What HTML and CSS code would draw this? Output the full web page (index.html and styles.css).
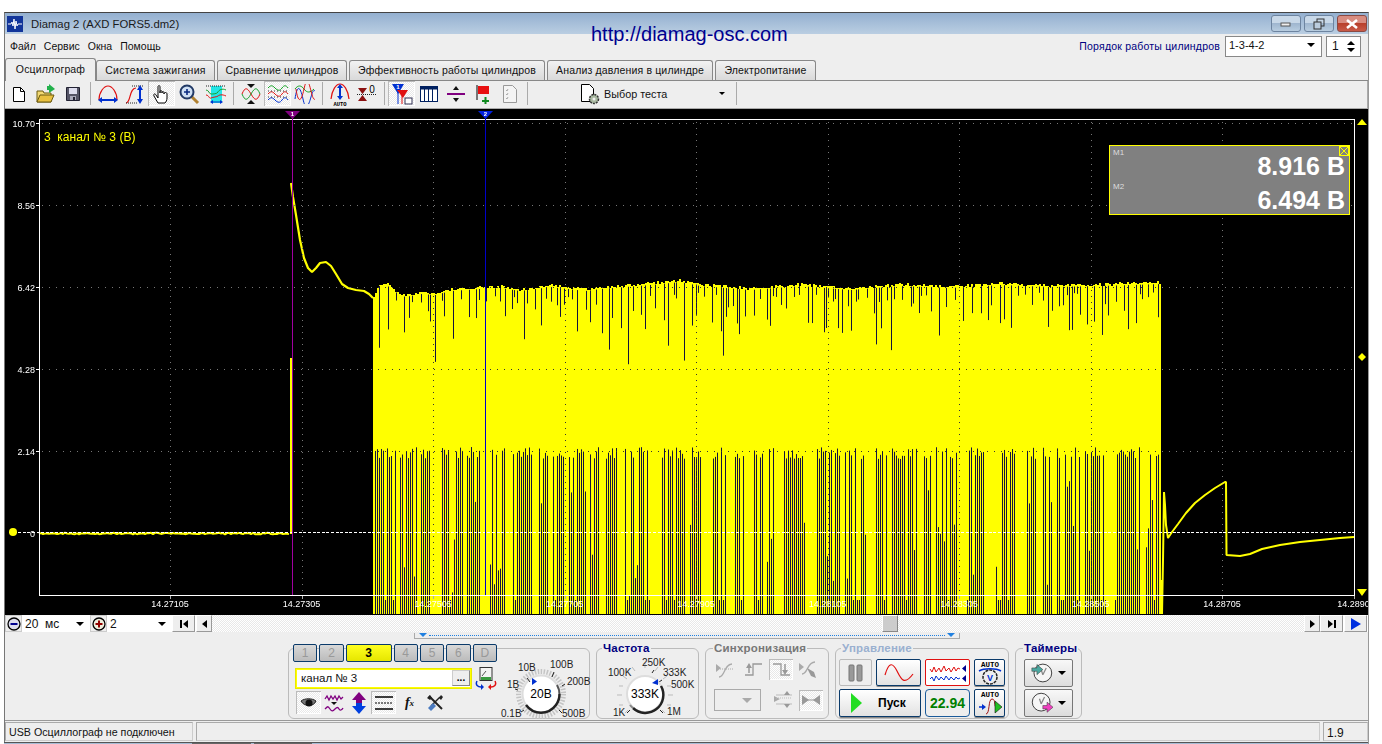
FILE: index.html
```html
<!DOCTYPE html>
<html lang="ru">
<head>
    <meta charset="UTF-8">
    <meta name="viewport" content="width=device-width, initial-scale=1.0">
    <title>Diamag 2 (AXD FORS5.dm2)</title>
    <link rel="stylesheet" href="styles.css">
</head>
<body>
<div class="window">
    <div class="titlebar">
        <svg class="app-icon" width="16" height="16" viewBox="0 0 16 16"><rect width="16" height="16" fill="#12359a"/><path d="M1 8h3l1-2 1 4 1-7 1 10 1-8 1 5 1-2h4" fill="none" stroke="#fff" stroke-width="1"/></svg>
        <span class="app-title">Diamag 2 (AXD FORS5.dm2)</span>
        <div class="win-controls">
            <button class="win-btn"><svg width="12" height="8" viewBox="0 0 12 8"><rect x="1" y="3" width="9" height="3" fill="#eee" stroke="#555"/></svg></button>
            <button class="win-btn"><svg width="12" height="12" viewBox="0 0 12 12"><rect x="4" y="1" width="7" height="7" fill="none" stroke="#333"/><rect x="1" y="4" width="7" height="7" fill="#bcd" stroke="#333"/></svg></button>
            <button class="win-btn win-close"><svg width="14" height="10" viewBox="0 0 14 10"><path d="M2 1l10 8M12 1L2 9" stroke="#fff" stroke-width="2.6"/></svg></button>
        </div>
    </div>
    <a class="site-link">http://diamag-osc.com</a>

    <div class="menubar">
        <span class="menu-item">Файл</span>
        <span class="menu-item">Сервис</span>
        <span class="menu-item">Окна</span>
        <span class="menu-item">Помощь</span>
        <span class="order-label">Порядок работы цилиндров</span>
        <div class="order-combo"><span>1-3-4-2</span><i class="arrow-down"></i></div>
        <div class="order-spin"><span>1</span><div class="spin-arrows"><i class="arrow-up"></i><i class="arrow-down"></i></div></div>
    </div>

    <div class="tabs">
        <div class="tab active">Осциллограф</div>
        <div class="tab tab-ignition">Система зажигания</div>
        <div class="tab tab-compare">Сравнение цилиндров</div>
        <div class="tab tab-power">Эффективность работы цилиндров</div>
        <div class="tab tab-pressure">Анализ давления в цилиндре</div>
        <div class="tab tab-supply">Электропитание</div>
    </div>

    <div class="toolbar">
        <div class="tool"><svg width="20" height="20" viewBox="0 0 20 20"><path d="M4.5 3.5h7l4 4v10h-11z" fill="#fff" stroke="#000"/><path d="M11.5 3.5v4h4" fill="none" stroke="#000"/></svg></div>
        <div class="tool"><svg width="22" height="22" viewBox="0 0 22 22"><path d="M2 19V8h6l1 2h7v9z" fill="#f2d873" stroke="#6a5a10"/><path d="M2 19l3-7h14l-3 7z" fill="#e8c040" stroke="#6a5a10"/><path d="M14 1l6 5-6 4z" fill="#22b14c"/><path d="M14 3v4h-2V3z" fill="#22b14c"/></svg></div>
        <div class="tool"><svg width="18" height="18" viewBox="0 0 18 18"><path d="M2.5 2.5h13v13h-13z" fill="#556" stroke="#223"/><rect x="5" y="3" width="8" height="6" fill="#dde"/><rect x="6" y="11" width="6" height="4" fill="#aab"/><rect x="9" y="12" width="2" height="3" fill="#223"/></svg></div>
        <i class="tool-sep"></i>
        <div class="tool"><svg width="22" height="22" viewBox="0 0 22 22"><path d="M2 17C2 9 7 3 11 3s9 6 9 14" fill="none" stroke="#e01010" stroke-width="1.2"/><path d="M3 17h16" stroke="#0030d0" stroke-width="2"/><path d="M1 17l4-3v6zM21 17l-4-3v6z" fill="#0030d0"/></svg></div>
        <div class="tool"><svg width="24" height="24" viewBox="0 0 24 24"><path d="M3 21c5 0 3-15 10-15" fill="none" stroke="#e01010" stroke-width="1.2"/><path d="M9 4h12M3 21h12" stroke="#222" stroke-dasharray="1 1"/><path d="M17 7v11" stroke="#0030d0" stroke-width="2"/><path d="M17 3l-3 5h6zM17 22l-3-5h6z" fill="#0030d0"/></svg></div>
        <div class="tool pressed"><svg width="20" height="22" viewBox="0 0 20 22"><path d="M6 20l-4-7c-1-2 1-3 2-1l2 3V4c0-2 2-2 2 0v6-1c0-2 2-2 2 0v1c0-2 2-2 2 0v1c0-2 3-2 3 0v4c0 2-1 4-2 5z" fill="#fff" stroke="#000"/></svg></div>
        <div class="tool"><svg width="22" height="22" viewBox="0 0 22 22"><path d="M13 13l7 7" stroke="#b08030" stroke-width="3"/><circle cx="9" cy="9" r="6.5" fill="#cfe0f4" stroke="#223a66" stroke-width="2"/><path d="M6 9h6M9 6v6" stroke="#0a2a80" stroke-width="1.6"/></svg></div>
        <div class="tool"><svg width="24" height="24" viewBox="0 0 24 24"><rect x="7" y="4" width="11" height="17" fill="#22e6e6"/><path d="M2 4h20" stroke="#222" stroke-dasharray="1 1"/><path d="M2 8c3 0 3 4 5 4s6 0 7-2 4-4 8-2" fill="none" stroke="#18a030"/><path d="M2 13c3 0 3 4 5 3s6-1 7-2 4-2 8 0" fill="none" stroke="#e01010"/><path d="M8 20h9" stroke="#0030d0"/><path d="M6 20l3-2v4zM19 20l-3-2v4z" fill="#0030d0"/></svg></div>
        <i class="tool-sep"></i>
        <div class="tool"><svg width="22" height="22" viewBox="0 0 22 22"><path d="M2 11c3-7 5-7 9 0s6 7 9 0" fill="none" stroke="#e01010"/><path d="M2 11c3 7 5 7 9 0s6-7 9 0" fill="none" stroke="#18a030"/><path d="M7 1h8l-4 4zM7 21h8l-4-4z" fill="#111"/></svg></div>
        <div class="tool pressed"><svg width="22" height="20" viewBox="0 0 22 20"><path d="M1 4c3-3 4-3 7 0s5 3 7 0 4-3 6 0" fill="none" stroke="#10a020"/><path d="M1 10c3-3 4-3 7 0s5 3 7 0 4-3 6 0" fill="none" stroke="#e01010"/><path d="M1 16c3-3 4-3 7 0s5 3 7 0 4-3 6 0" fill="none" stroke="#0030d0"/><path d="M1 7h20M1 13h20" stroke="#333" stroke-dasharray="1 2"/></svg></div>
        <div class="tool"><svg width="22" height="20" viewBox="0 0 22 20"><path d="M1 5c3-4 6-4 9 0s6 4 10 0" fill="none" stroke="#10a020"/><path d="M1 15c2-14 5-14 8 0s6 5 8-2 3-7 4-6" fill="none" stroke="#0030d0"/><path d="M2 5c2 14 5 14 8 0s5-6 7 2 3 9 4 8" fill="none" stroke="#e01010"/></svg></div>
        <i class="tool-sep"></i>
        <div class="tool"><svg width="20" height="24" viewBox="0 0 20 24"><path d="M1 17C2 8 6 2 10 2s8 6 9 15" fill="none" stroke="#e01010" stroke-width="1.2"/><path d="M10 5v10" stroke="#0030d0" stroke-width="2"/><path d="M10 2L7 6h6zM10 18l-3-4h6z" fill="#0030d0"/><text x="10" y="23.5" class="auto-text">AUTO</text></svg></div>
        <div class="tool"><svg width="22" height="20" viewBox="0 0 22 20"><path d="M2 4h9l-4.500 6zM2 17h9l-4.500-6z" fill="#8a1010"/><path d="M1 10.500h20" stroke="#222" stroke-dasharray="1 1"/><text x="16" y="9" class="zero-text">0</text></svg></div>
        <i class="tool-sep"></i>
        <div class="tool pressed"><svg width="22" height="24" viewBox="0 0 22 24"><path d="M1 2h12L7 12z" fill="#0030d0"/><path d="M6 8h11l-5 8z" fill="#e01010"/><path d="M7 10v12" stroke="#0030d0"/><path d="M11 12v10" stroke="#e01010"/><rect x="14" y="16" width="7" height="6" fill="#fff" stroke="#335"/><text x="7" y="7" class="tiny-num">1</text></svg></div>
        <div class="tool"><svg width="20" height="18" viewBox="0 0 20 18"><rect x="1.500" y="1.500" width="17" height="15" fill="#fff" stroke="#002060"/><rect x="1.500" y="1.500" width="17" height="3" fill="#002060"/><path d="M5.500 2v14M9.500 2v14M13.500 2v14" stroke="#002060"/></svg></div>
        <div class="tool"><svg width="20" height="20" viewBox="0 0 20 20"><path d="M1 10h18" stroke="#800080" stroke-width="2"/><path d="M10 2L7 6h6zM10 18l-3-4h6z" fill="#111"/></svg></div>
        <div class="tool"><svg width="16" height="20" viewBox="0 0 16 20"><path d="M2 1v15" stroke="#000"/><path d="M3 2h11v8H3z" fill="#e81010"/><path d="M7 17h7M10.500 13v7" stroke="#108a20" stroke-width="2"/></svg></div>
        <div class="tool"><svg width="16" height="20" viewBox="0 0 16 20"><path d="M1.500 1.500h9l4 4v13h-13z" fill="#f4f4f4" stroke="#999"/><path d="M4 6l1 1 1-2M4 10l1 1 1-2M4 14l1 1 1-2" fill="none" stroke="#aaa"/></svg></div>
        <i class="tool-sep"></i>
        <div class="test-select">
            <svg width="22" height="22" viewBox="0 0 22 22"><path d="M1.500 1.500h8l4 4v13h-12z" fill="#fff" stroke="#000"/><circle cx="14" cy="16" r="4.500" fill="#a8b8a0" stroke="#333" stroke-width="1.500" stroke-dasharray="2 1"/><circle cx="14" cy="16" r="1.500" fill="#eee"/></svg>
            <span>Выбор теста</span>
            <i class="arrow-down"></i>
        </div>
        <i class="tool-sep"></i>
    </div>

    <div class="scope" id="scope">
        <canvas id="scope-canvas" width="1364" height="506"></canvas>
        <div class="channel-caption">3&nbsp; канал № 3 (В)</div>
        <div class="measure">
            <span class="measure-close"></span>
            <div class="measure-name">M1</div>
            <div class="measure-value">8.916 В</div>
            <div class="measure-name measure-name-2">M2</div>
            <div class="measure-value">6.494 В</div>
        </div>
    </div>

    <div class="scalebar">
        <button class="scale-btn"><svg width="14" height="14" viewBox="0 0 14 14"><circle cx="7" cy="7" r="6" fill="#dde" stroke="#000" stroke-width="1.300"/><path d="M3.500 7h7" stroke="#000090" stroke-width="2"/></svg></button>
        <div class="scale-combo scale-time"><span>20&nbsp; мс</span><i class="arrow-down"></i></div>
        <button class="scale-btn"><svg width="14" height="14" viewBox="0 0 14 14"><circle cx="7" cy="7" r="6" fill="#eed" stroke="#000" stroke-width="1.300"/><path d="M3.500 7h7M7 3.500v7" stroke="#900000" stroke-width="2"/></svg></button>
        <div class="scale-combo scale-zoom"><span>2</span><i class="arrow-down"></i></div>
        <button class="nav-btn nav-wide"><i class="bar"></i><i class="arrow-left"></i></button>
        <button class="nav-btn"><i class="arrow-left"></i></button>
        <div class="scrollbar"><span class="scroll-thumb"></span></div>
        <button class="nav-btn"><i class="arrow-right"></i></button>
        <button class="nav-btn nav-wide"><i class="arrow-right"></i><i class="bar"></i></button>
        <button class="nav-btn nav-wide"><i class="arrow-right arrow-blue"></i></button>
    </div>

    <div class="panel">
        <div class="marker-strip"><i class="strip-mark"></i><span class="strip-dots"></span><i class="strip-mark"></i></div>
        <div class="groups">
            <div class="group group-channel">
                <div class="channel-left">
                    <div class="channel-tabs">
                        <span class="ch-btn">1</span>
                        <span class="ch-btn">2</span>
                        <span class="ch-btn ch-active">3</span>
                        <span class="ch-btn">4</span>
                        <span class="ch-btn">5</span>
                        <span class="ch-btn">6</span>
                        <span class="ch-btn">D</span>
                    </div>
                    <div class="channel-input-row">
                        <div class="channel-input"><span>канал № 3</span><button class="dots-btn">...</button></div>
                        <svg width="22" height="24" viewBox="0 0 22 24"><rect x="5" y="1.500" width="12" height="13" fill="#f4f4f4" stroke="#333"/><path d="M7 10l4-5" stroke="#555"/><rect x="6" y="11" width="10" height="3" fill="#3a9a40"/><path d="M2 15c-2 4 1 6 4 6" fill="none" stroke="#0030d0" stroke-width="1.500"/><path d="M6 18v6l3-3z" fill="#0030d0"/><path d="M20 15c2 4-1 6-4 6" fill="none" stroke="#e01010" stroke-width="1.500"/><path d="M16 18v6l-3-3z" fill="#e01010"/></svg>
                    </div>
                    <div class="channel-tools">
                        <span class="ch-tool pressed"><svg width="18" height="14" viewBox="0 0 18 14"><path d="M1 5c4-3 11-3 15 0-2 6-12 6-15 0z" fill="#777" stroke="#222"/><circle cx="9" cy="7" r="3.500" fill="#111"/></svg></span>
                        <span class="ch-tool"><svg width="20" height="18" viewBox="0 0 20 18"><path d="M1 5l2-3 2 4 2-4 2 3 2-3 2 4 2-4 2 3 2-2" fill="none" stroke="#800080" stroke-width="1.300"/><path d="M7 8h6l-3 3z" fill="#111"/><path d="M1 15c3-3 3-3 5 0s3 2 5 0 3-2 4 0 3 1 4-1" fill="none" stroke="#800080" stroke-width="1.300"/></svg></span>
                        <span class="ch-tool"><svg width="18" height="22" viewBox="0 0 18 22"><path d="M9 0L2 8h4v3h6V8h4z" fill="#800080"/><path d="M9 22l7-8h-4v-3H6v3H2z" fill="#0040e0"/></svg></span>
                        <span class="ch-tool pressed"><svg width="20" height="16" viewBox="0 0 20 16"><path d="M1 2h18M1 14h18" stroke="#000" stroke-width="1.300"/><path d="M1 8h18" stroke="#000" stroke-dasharray="2 1"/></svg></span>
                        <span class="ch-tool ch-fx">f<small>x</small></span>
                        <span class="ch-tool"><svg width="18" height="18" viewBox="0 0 18 18"><path d="M3 2l13 13" stroke="#222" stroke-width="2"/><path d="M1 4l3-3 2 3-2 2z" fill="#222"/><path d="M14 3L5 12" stroke="#222" stroke-width="1.500"/><path d="M15 1l2 2-2 3-2-2z" fill="#222"/><path d="M7 9l3 3-5 5-3-3z" fill="#4a7ac0"/></svg></span>
                    </div>
                </div>
                <svg class="knob" width="94" height="71" viewBox="0 0 94 71">
                    <circle cx="44" cy="45" r="22.500" fill="none" stroke="#c4c4c4" stroke-width="5" stroke-dasharray="1.500 1.500"/>
                    <circle cx="44" cy="45" r="18.500" fill="#fff" stroke="#ddd" stroke-width="2"/>
                    <path d="M59 56a18.500 18.500 0 0 1-30 0M62.500 45a18.500 18.500 0 0 1-3.500 11" fill="none" stroke="#222" stroke-width="2.500"/>
                    <path d="M60 36a18.500 18.500 0 0 1 2.500 9" fill="none" stroke="#555" stroke-width="2"/>
                    <path d="M33 33l-3-4M55 28l2-5M65 37l3-2M21 41l-3-1M27 61l-3 2M62 61l3 3" stroke="#222"/>
                    <path d="M35 29v7l5-3.500z" fill="#0030d0"/>
                    <text x="44" y="49" class="knob-value">20В</text>
                    <text x="21" y="22" class="knob-label">10В</text>
                    <text x="53" y="19" class="knob-label">100В</text>
                    <text x="70" y="36" class="knob-label">200В</text>
                    <text x="10" y="39" class="knob-label">1В</text>
                    <text x="4" y="68" class="knob-label">0.1В</text>
                    <text x="65" y="68" class="knob-label">500В</text>
                </svg>
            </div>

            <div class="group group-freq">
                <span class="group-title">Частота</span>
                <svg class="knob" width="103" height="71" viewBox="1 0 103 71">
                    <path d="M49 14v5M36 18l3 4M62 18l-3 4M27 27l4 3M71 27l-4 3M23 37h4M75 37h-4M21 46h5M77 46h-5M23 56h4M75 56h-4M29 64l3-3M69 64l-3-3" stroke="#bbb"/>
                    <path d="M31 64l3-3M67 64l-3-3M58 21l-2 3M66 31l-3 2" stroke="#222"/>
                    <circle cx="49" cy="45" r="18" fill="#fff" stroke="#ddd" stroke-width="2"/>
                    <path d="M65 37a18 18 0 0 1-28 22" fill="none" stroke="#222" stroke-width="2.500"/>
                    <path d="M37 59a18 18 0 0 1-3-3" fill="none" stroke="#888" stroke-width="2"/>
                    <path d="M62 30v6l-6-2z" fill="#0030d0"/>
                    <text x="49" y="49" class="knob-value">333K</text>
                    <text x="46" y="17" class="knob-label">250K</text>
                    <text x="67" y="27" class="knob-label">333K</text>
                    <text x="75" y="39" class="knob-label">500K</text>
                    <text x="12" y="27" class="knob-label">100K</text>
                    <text x="17" y="67" class="knob-label">1K</text>
                    <text x="71" y="66" class="knob-label">1M</text>
                </svg>
            </div>

            <div class="group group-sync">
                <span class="group-title">Синхронизация</span>
                <div class="sync-row">
                    <span class="sync-tool"><svg width="20" height="18" viewBox="0 0 20 18"><path d="M1 3l5 4-5 4z" fill="#aaa"/><path d="M4 16c6 0 5-13 13-13" fill="none" stroke="#aaa" stroke-width="1.300"/><path d="M5 8h13" stroke="#aaa" stroke-dasharray="1 1"/></svg></span>
                    <span class="sync-tool"><svg width="20" height="18" viewBox="0 0 20 18"><path d="M2 14h8V3h9" fill="none" stroke="#999" stroke-width="1.300"/><path d="M6 5v7" stroke="#999" stroke-width="1.500"/><path d="M6 2L3 7h6z" fill="#999"/></svg></span>
                    <span class="sync-tool pressed"><svg width="20" height="18" viewBox="0 0 20 18"><path d="M2 3h8v11h9" fill="none" stroke="#999" stroke-width="1.300"/><path d="M14 3v7" stroke="#999" stroke-width="1.500"/><path d="M14 14l-3-5h6z" fill="#999"/></svg></span>
                    <span class="sync-tool"><svg width="22" height="20" viewBox="0 0 22 20"><path d="M1 3l5 4-5 4z" fill="#aaa"/><path d="M4 14c6 0 5-12 13-12" fill="none" stroke="#aaa" stroke-width="1.300"/><path d="M9 8l7 4 2 6-5-2z" fill="#999"/></svg></span>
                </div>
                <div class="sync-row sync-row-low">
                    <div class="sync-combo"><i class="arrow-down arrow-gray"></i></div>
                    <span class="sync-tool"><svg width="20" height="20" viewBox="0 0 20 20"><path d="M1 6l6 3-6 3z" fill="#aaa"/><path d="M3 5h16M3 14h16" stroke="#bbb"/><path d="M3 8h16" stroke="#bbb" stroke-dasharray="1 1"/><path d="M14 1l-3 4h6zM14 18l-3-4h6z" fill="#999"/></svg></span>
                    <span class="sync-tool pressed"><svg width="20" height="12" viewBox="0 0 20 12"><path d="M1 1l7 5-7 5zM19 1l-7 5 7 5z" fill="#999"/><path d="M1 6h18" stroke="#999"/></svg></span>
                </div>
            </div>

            <div class="group group-control">
                <span class="group-title">Управление</span>
                <div class="control-grid">
                    <button class="ctl ctl-off"><svg width="18" height="20" viewBox="0 0 18 20"><rect x="2" y="2" width="5" height="16" rx="1" fill="#999" stroke="#777"/><rect x="10" y="2" width="5" height="16" rx="1" fill="#999" stroke="#777"/></svg></button>
                    <button class="ctl"><svg width="30" height="20" viewBox="0 0 30 20"><path d="M1 12C5-2 9 0 13 8s7 15 16 3" fill="none" stroke="#e01010" stroke-width="1.200"/></svg></button>
                    <button class="ctl ctl-red"><svg width="38" height="22" viewBox="0 0 38 22"><path d="M1 7l2 3 2-5 2 5 3-4 2 4 3-6 2 5 3-3 2 4 3-5 2 4 2-3 2 1" fill="none" stroke="#e01010"/><path d="M1 17l2-2 2 4 2-5 3 4 2-3 3 3 2-4 3 4 2-3 3 3 2-3 2 2 2-1" fill="none" stroke="#0030d0"/><path d="M37 3v7l-4-3.500zM37 13v7l-4-3.500z" fill="#000090"/></svg></button>
                    <button class="ctl"><svg width="26" height="26" viewBox="0 0 26 26"><text x="13" y="7" class="auto-text-lg">AUTO</text><path d="M2 11c5-3 17-3 22 0" fill="none" stroke="#0030d0" stroke-width="1.500"/><circle cx="13" cy="17" r="7" fill="#eee" stroke="#222" stroke-width="1.500" stroke-dasharray="3 1"/><text x="13" y="20.500" class="v-text">V</text></svg></button>
                    <button class="ctl ctl-start"><svg width="18" height="22" viewBox="0 0 18 22"><path d="M4 1l11 10L4 21z" fill="#22dd22"/></svg><b>Пуск</b></button>
                    <button class="ctl ctl-time">22.94</button>
                    <button class="ctl"><svg width="26" height="26" viewBox="0 0 26 26"><text x="13" y="7" class="auto-text-lg">AUTO</text><path d="M6 17h-4" stroke="#0030d0" stroke-width="1.500"/><path d="M5 14l4 3-4 3z" fill="#0030d0"/><path d="M9 24c4 0 2-15 6-15s2 8 4 8" fill="none" stroke="#a01010"/><path d="M18 11l7 6-7 6z" fill="#22c022" stroke="#111" stroke-width=".6"/></svg></button>
                </div>
            </div>

            <div class="group group-timers">
                <span class="group-title">Таймеры</span>
                <button class="timer-btn">
                    <svg width="26" height="24" viewBox="0 0 26 24"><circle cx="14" cy="12" r="10.500" fill="#f6f6f6" stroke="#222"/><path d="M14 14l4-8M14 14l-2-6" stroke="#888" stroke-width="1.500"/><path d="M1 6h6V2l7 6-7 6v-4H1z" fill="#4aa8a0" stroke="#333" stroke-width=".6"/></svg>
                    <i class="arrow-down"></i>
                </button>
                <button class="timer-btn">
                    <svg width="26" height="24" viewBox="0 0 26 24"><circle cx="12" cy="11" r="10.500" fill="#f6f6f6" stroke="#222"/><path d="M12 13l4-8M12 13l-2-6" stroke="#888" stroke-width="1.500"/><path d="M14 15h5v-4l7 6-7 6v-4h-5z" fill="#f040c0" stroke="#333" stroke-width=".6"/></svg>
                    <i class="arrow-down"></i>
                </button>
            </div>
        </div>
    </div>

    <div class="statusbar">
        <div class="status-cell status-main">USB Осциллограф не подключен</div>
        <div class="status-cell status-mid"></div>
        <div class="status-cell status-ver">1.9</div>
    </div>
    <div class="taskstrip"><span class="task-tab"></span><span class="task-tab task-tab-2"></span></div>
</div>
<script src="scope.js"></script>
</body>
</html>
```

FILE: styles.css
```css
* {
    box-sizing: border-box;
}

html, body {
    margin: 0;
    height: 744px;
    overflow: hidden;
    background-color: white;
}

body {
    padding: 12px 13px 0 4px;
    font-family: 'Liberation Sans', Arial, sans-serif;
    font-size: 11px;
    color: #111;
}

button {
    font-family: inherit;
    padding: 0;
    cursor: default;
}

i {
    display: block;
}

.window {
    position: relative;
    width: 1365px;
    height: 732px;
    background-color: #eeeeee;
    border-top: 1px solid #444;
    border-left: 1px solid #777;
    border-right: 1px solid #999;
}

/* small arrows */
.arrow-down, .arrow-up, .arrow-left, .arrow-right {
    width: 0;
    height: 0;
    border-style: solid;
    border-color: transparent;
}

.arrow-down {
    border-width: 4px 4px 0;
    border-top-color: #000;
}

.arrow-up {
    border-width: 0 4px 4px;
    border-bottom-color: #000;
}

.arrow-left {
    border-width: 4px 5px 4px 0;
    border-right-color: #000;
}

.arrow-right {
    border-width: 4px 0 4px 5px;
    border-left-color: #000;
}

.arrow-blue {
    border-width: 6px 0 6px 10px;
    border-left-color: #0030e0;
}

.arrow-gray {
    border-top-color: #aaa;
    border-width: 5px 5px 0;
}

/* title bar */
.titlebar {
    display: flex;
    align-items: center;
    height: 21px;
    padding-left: 2px;
    background: linear-gradient(#94b0d0, #bacee2);
}

.app-title {
    margin-left: 8px;
    font-size: 11.3px;
    color: #1a1a1a;
}

.win-controls {
    display: flex;
    gap: 3px;
    margin-left: auto;
    margin-right: 1px;
}

.win-btn {
    display: flex;
    align-items: center;
    justify-content: center;
    width: 30px;
    height: 17px;
    border: 1px solid #6d84a0;
    border-radius: 3px;
    background: linear-gradient(#c8d8e8 45%, #9fb6cf 50%, #b8cde0);
}

.win-close {
    background: linear-gradient(#d88c80 45%, #b8402c 50%, #c85a48);
    border-color: #8a4a44;
}

.site-link {
    position: absolute;
    left: 586px;
    top: 10px;
    font-size: 20px;
    color: #000090;
}

/* menu */
.menubar {
    display: flex;
    align-items: center;
    height: 24px;
    padding-left: 5px;
}

.menu-item {
    margin-right: 8px;
    font-size: 10.5px;
}

.order-label {
    margin-left: auto;
    margin-right: 5px;
    font-size: 10.5px;
    letter-spacing: 0.2px;
    color: #000080;
}

.order-combo {
    display: flex;
    align-items: center;
    justify-content: space-between;
    width: 97px;
    height: 21px;
    padding: 0 6px 2px 3px;
    background-color: white;
    border: 1px solid #888;
}

.order-spin {
    display: flex;
    align-items: center;
    justify-content: space-between;
    width: 35px;
    height: 21px;
    margin: 0 7px 0 4px;
    padding: 0 5px;
    font-size: 12px;
    background-color: white;
    border: 1px solid #888;
}

.spin-arrows {
    display: flex;
    flex-direction: column;
    gap: 3px;
}

/* tabs */
.tabs {
    display: flex;
    height: 23px;
    border-bottom: 1px solid #888;
}

.tab {
    width: 119px;
    height: 20px;
    margin: 2px 2px 0 0;
    padding-top: 3px;
    text-align: center;
    font-size: 10.5px;
    letter-spacing: 0.15px;
    background: linear-gradient(#f2f2f2, #d9d9d9);
    border: 1px solid #888;
    border-bottom: none;
    border-radius: 3px 3px 0 0;
}

.tab-ignition {
    letter-spacing: 0.3px;
}

.tab.active {
    width: 91px;
    height: 23px;
    margin: 0;
    padding-top: 4px;
    background: #eee;
}

.tab-compare { width: 130px; }
.tab-power { width: 196px; }
.tab-pressure { width: 166px; }
.tab-supply { width: 101px; }

/* toolbar */
.toolbar {
    display: flex;
    align-items: center;
    height: 28px;
    padding: 0 0 2px 0;
    border-bottom: 1px solid #aaa;
    border-right: 1px solid #aaa;
}

.tool {
    display: flex;
    align-items: center;
    justify-content: center;
    width: 27px;
    height: 25px;
}

.pressed {
    background: repeating-conic-gradient(#fff 0 25%, #e8e8e8 0 50%) 0 0 / 2px 2px;
    box-shadow: inset 1px 1px 0 #bbb, inset -1px -1px 0 #fff;
}

.tool-sep {
    align-self: stretch;
    width: 1px;
    margin: 1px 3px 1px 4px;
    background-color: #aaa;
}

.test-select {
    display: flex;
    align-items: center;
    width: 201px;
    padding: 0 7px 0 49px;
    font-size: 10.8px;
}

.test-select span {
    margin-left: 2px;
}

.test-select .arrow-down {
    margin-left: auto;
    border-width: 3px 3px 0;
}

.auto-text {
    font: bold 5.500px 'Liberation Mono', monospace;
    text-anchor: middle;
    fill: #000;
}

.auto-text-lg {
    font: bold 7.500px 'Liberation Mono', monospace;
    text-anchor: middle;
    fill: #000;
}

.zero-text {
    font: 10px 'Liberation Sans', sans-serif;
    text-anchor: middle;
    fill: #000;
}

.tiny-num {
    font: bold 6px 'Liberation Sans', sans-serif;
    text-anchor: middle;
    fill: #fff;
}

.v-text {
    font: bold 9px 'Liberation Sans', sans-serif;
    text-anchor: middle;
    fill: #0030d0;
}

/* oscilloscope */
.scope {
    position: relative;
    height: 506px;
    background-color: black;
    overflow: hidden;
}

.scope canvas {
    display: block;
}

.y-label, .x-label, .cursor-num {
    position: absolute;
    font-size: 9px;
    line-height: 10px;
    color: #fff;
    white-space: nowrap;
}

.y-label {
    width: 30px;
    text-align: right;
}

.x-label {
    width: 44px;
    text-align: center;
}

.cursor-num {
    width: 9px;
    font-size: 6px;
    line-height: 7px;
    font-weight: bold;
    text-align: center;
}

.channel-caption {
    position: absolute;
    left: 39px;
    top: 21px;
    font-size: 12px;
    color: #ffff00;
}

.measure {
    position: absolute;
    left: 1104px;
    top: 36px;
    width: 241px;
    height: 70px;
    padding: 0 4px 0 3px;
    background-color: #808080;
    border: 1px solid #ffff00;
    color: #fff;
}

.measure-close {
    position: absolute;
    right: 0;
    top: 0;
    width: 10px;
    height: 10px;
    border: 1px solid #ffff00;
    background:
        linear-gradient(45deg, transparent 46%, #ffff00 46%, #ffff00 54%, transparent 54%),
        linear-gradient(-45deg, transparent 46%, #ffff00 46%, #ffff00 54%, transparent 54%);
}

.measure-name {
    height: 0;
    padding-top: 2px;
    font-size: 8px;
    line-height: 9px;
    color: #ddd;
}

.measure-value {
    height: 32px;
    padding-top: 4px;
    text-align: right;
    font-size: 25px;
    line-height: 29px;
    font-weight: bold;
}

/* scale row */
.scalebar {
    display: flex;
    height: 17px;
    background-color: white;
}

.scale-btn {
    display: flex;
    align-items: center;
    justify-content: center;
    width: 17px;
    height: 17px;
    background-color: #eee;
    border: 1px solid #ccc;
}

.scale-combo {
    display: flex;
    align-items: center;
    justify-content: space-between;
    padding: 0 6px 0 3px;
    font-size: 12px;
    background-color: white;
}

.scale-time { width: 68px; }
.scale-zoom { width: 65px; }

.nav-btn {
    display: flex;
    align-items: center;
    justify-content: center;
    gap: 1px;
    width: 16px;
    height: 17px;
    background-color: #eee;
    border: 1px solid #fff;
    border-right-color: #999;
    border-bottom-color: #999;
}

.nav-wide {
    width: 23px;
    margin-right: 1px;
}

.nav-btn .bar {
    width: 2px;
    height: 8px;
    background-color: #000;
}

.scrollbar {
    position: relative;
    flex: 1;
    background: repeating-conic-gradient(#fff 0 25%, #e8e8e8 0 50%) 0 0 / 2px 2px;
}

.scroll-thumb {
    position: absolute;
    left: 670px;
    top: 0;
    width: 16px;
    height: 17px;
    background-color: #ccc;
    border: 1px solid #fff;
    border-right-color: #888;
    border-bottom-color: #888;
}

/* bottom panel */
.panel {
    height: 88px;
    border-bottom: 1px solid #999;
}

.marker-strip {
    display: flex;
    align-items: flex-start;
    justify-content: space-between;
    width: 546px;
    height: 6px;
    margin: 1px 0 0 409px;
    padding: 0 4px;
    border: 1px solid #aaa;
    border-top: none;
}

.strip-mark {
    width: 0;
    height: 0;
    border-style: solid;
    border-color: transparent;
    border-width: 4px 4px 0;
    border-top-color: #2080e0;
}

.strip-dots {
    flex: 1;
    height: 1px;
    margin: 2px 2px 0;
    border-top: 1px dotted #2080e0;
}

.groups {
    display: flex;
    gap: 6px;
    margin: 9px 0 0 283px;
}

.group {
    position: relative;
    height: 71px;
    border: 1px solid #bbb;
    border-radius: 6px;
}

.group-title {
    position: absolute;
    top: -7px;
    left: 5px;
    padding: 0 1px;
    font-size: 11.5px;
    line-height: 13px;
    font-weight: bold;
    letter-spacing: 0.2px;
    color: #000080;
    background-color: #eee;
}

/* channel group */
.group-channel {
    display: flex;
    width: 302px;
}

.channel-left {
    width: 208px;
}

.channel-tabs {
    display: flex;
    gap: 2px;
    margin: -5px 0 0 4px;
}

.ch-btn {
    width: 25px;
    height: 18px;
    text-align: center;
    font-size: 12px;
    line-height: 17px;
    color: #999;
    background: linear-gradient(#d8d8d8, #bbb);
    border: 1px solid #0a3a6a;
    border-radius: 2px;
}

.ch-active {
    width: 47px;
    font-weight: bold;
    color: #000;
    background: linear-gradient(#ffff20, #e6e600);
}

.channel-input-row {
    display: flex;
    align-items: center;
    gap: 3px;
    margin: 4px 0 0 6px;
}

.channel-input {
    display: flex;
    align-items: center;
    justify-content: space-between;
    width: 177px;
    height: 21px;
    padding: 0 1px 0 5px;
    font-size: 11.5px;
    background-color: white;
    border: 1px solid #e8e800;
    outline: 1px solid #ffff00;
    outline-offset: -2px;
}

.dots-btn {
    width: 18px;
    height: 16px;
    font-size: 10px;
    font-weight: bold;
    line-height: 8px;
    background-color: #eee;
    border: 1px solid #ccc;
    border-right-color: #888;
    border-bottom-color: #888;
}

.channel-tools {
    display: flex;
    align-items: center;
    margin: 1px 0 0 7px;
}

.ch-tool {
    display: flex;
    align-items: center;
    justify-content: center;
    width: 25px;
    height: 23px;
}

.ch-fx {
    margin-left: 1px;
    font-family: 'Liberation Serif', serif;
    font-size: 14px;
    font-weight: bold;
    font-style: italic;
}

.ch-fx small {
    font-size: 9px;
}

.knob {
    display: block;
    overflow: visible;
}

.knob-label {
    font: 10px 'Liberation Sans', sans-serif;
    fill: #222;
}

.knob-value {
    font: 12px 'Liberation Sans', sans-serif;
    text-anchor: middle;
    fill: #000;
}

.group-freq {
    width: 103px;
}

/* synchronisation, disabled */
.group-sync {
    width: 124px;
    padding: 10px 0 0 7px;
}

.group-sync .group-title {
    left: 7px;
    color: #777;
}

.sync-row {
    display: flex;
    gap: 4px;
}

.sync-row-low {
    align-items: center;
    margin-top: 9px;
    margin-left: 1px;
}

.sync-tool {
    display: flex;
    align-items: center;
    justify-content: center;
    width: 24px;
    height: 21px;
}

.sync-combo {
    display: flex;
    align-items: center;
    justify-content: flex-end;
    width: 47px;
    height: 22px;
    margin-right: 6px;
    padding-right: 8px;
    border: 1px solid #aaa;
}

/* control group */
.group-control {
    width: 174px;
    padding: 10px 0 0 3px;
}

.group-control .group-title {
    color: #9ab0d0;
}

.control-grid {
    display: grid;
    grid-template-columns: 33px 45px 45px 31px;
    grid-template-rows: 27px 28px;
    gap: 3px 4px;
}

.ctl {
    display: flex;
    align-items: center;
    justify-content: center;
    background: linear-gradient(#fff, #e2e2e2);
    border: 1px solid #0a3a6a;
    border-radius: 2px;
    box-shadow: 0 1px 0 #888;
}

.ctl-off {
    background: #eee;
    border-color: #bbb;
    box-shadow: none;
}

.ctl-red {
    border-color: #e01010;
    box-shadow: none;
    background: #fff;
}

.ctl-start {
    grid-column: span 2;
    justify-content: flex-start;
    padding-left: 7px;
    font-size: 12px;
}

.ctl-start b {
    margin-left: 13px;
}

.ctl-time {
    font-size: 14px;
    font-weight: bold;
    color: #008000;
    background: #eee;
    border-color: #1a5a9a;
    border-radius: 4px;
    box-shadow: none;
}

/* timers */
.group-timers {
    width: 67px;
    padding: 10px 0 0 8px;
}

.group-timers .group-title {
    left: 7px;
}

.timer-btn {
    display: flex;
    align-items: center;
    gap: 5px;
    width: 49px;
    height: 28px;
    margin-bottom: 2px;
    padding: 0 6px;
    background: linear-gradient(#f8f8f8, #dcdcdc);
    border: 1px solid #777;
    border-radius: 2px;
}

/* status bar */
.statusbar {
    display: flex;
    height: 21px;
    padding-top: 1px;
    gap: 3px;
}

.status-cell {
    height: 19px;
    padding: 3px 0 0 3px;
    font-size: 10.7px;
    border: 1px solid #ccc;
    border-top-color: #aaa;
    border-left-color: #aaa;
}

.status-main { width: 188px; }
.status-mid { width: 1124px; }
.status-ver { flex: 1; font-size: 12px; }

.taskstrip {
    position: relative;
    display: flex;
    height: 4px;
    margin-left: -1px;
    padding-left: 188px;
    gap: 3px;
    background-color: #a6bcd4;
    border-top: 1px solid #555;
}

.task-tab {
    width: 59px;
    background-color: #eee;
    border: 1px solid #666;
    border-bottom: none;
}

.task-tab-2 {
    width: 58px;
}
```

FILE: scope.js
```js
const scope = document.getElementById('scope');
const ctx = document.getElementById('scope-canvas').getContext('2d');

// everything below is in page coordinates of the screenshot
const ORIGIN_X = 5;
const ORIGIN_Y = 109;
const FRAME = { left: 39, top: 119, right: 1354, bottom: 595 };
const BLOCK = { left: 373, right: 1161, bottom: 614 };
const YELLOW = '#ffff00';

const Y_TICKS = [[123, '10.70'], [205, '8.56'], [287, '6.42'], [369, '4.28'], [451, '2.14'], [533, '0']];
const X_START = 170;
const X_STEP = 131.5;
const X_NAMES = ['14.27105', '14.27305', '14.27505', '14.27705', '14.27905', '14.28105', '14.28305', '14.28505', '14.28705', '14.2890'];

let seed = 4711;
function rnd() {
    seed = (seed * 16807) % 2147483647;
    return seed / 2147483647;
}

function lerpTable(table, x) {
    for (let i = 1; i < table.length; i++) {
        if (x <= table[i][0]) {
            const a = table[i - 1];
            const b = table[i];
            return a[1] + (b[1] - a[1]) * (x - a[0]) / (b[0] - a[0]);
        }
    }
    return table[table.length - 1][1];
}

function addLabel(cls, text, x, y) {
    const el = document.createElement('div');
    el.className = cls;
    el.textContent = text;
    el.style.left = (x - ORIGIN_X) + 'px';
    el.style.top = (y - ORIGIN_Y) + 'px';
    scope.appendChild(el);
}

function polyline(points, width) {
    ctx.strokeStyle = YELLOW;
    ctx.lineWidth = width;
    ctx.lineJoin = 'bevel';
    ctx.beginPath();
    points.forEach((p, i) => i ? ctx.lineTo(p[0], p[1]) : ctx.moveTo(p[0], p[1]));
    ctx.stroke();
}

function triangle(x1, y1, x2, y2, x3, y3, color) {
    ctx.fillStyle = color;
    ctx.beginPath();
    ctx.moveTo(x1, y1);
    ctx.lineTo(x2, y2);
    ctx.lineTo(x3, y3);
    ctx.fill();
}

// top edge of the dense part
const ENVELOPE = [[373, 297], [378, 283], [386, 282], [395, 289], [405, 294], [420, 291], [435, 292], [450, 288],
    [480, 286], [500, 285], [520, 288], [550, 284], [585, 288], [600, 286], [650, 282], [680, 279], [700, 283],
    [750, 287], [800, 283], [850, 287], [900, 283], [950, 285], [1000, 282], [1050, 284], [1100, 283], [1161, 281]];

function drawBlock() {
    ctx.fillStyle = YELLOW;
    for (let x = BLOCK.left; x < BLOCK.right; x += 2) {
        const top = Math.round(lerpTable(ENVELOPE, x) + rnd() * 3);
        ctx.fillRect(x, top, 2, BLOCK.bottom - top);
    }

    // thin notches hanging from the top edge
    ctx.fillStyle = '#14143c';
    for (let x = BLOCK.left + 6; x < BLOCK.right;) {
        const top = lerpTable(ENVELOPE, x) + 3;
        const r = rnd();
        const depth = r > 0.88 ? 42 + rnd() * 36 : r > 0.45 ? 20 + rnd() * 25 : 6 + rnd() * 14;
        ctx.fillRect(x, top, 1, depth);
        x += 2 + Math.floor(rnd() * 8);
    }

    // bursts of lines rising from the bottom
    for (let x = BLOCK.left + 2; x < BLOCK.right - 2;) {
        const count = 4 + Math.floor(rnd() * 10);
        for (let i = 0; i < count && x < BLOCK.right - 2; i++) {
            const r = rnd();
            const top = r > 0.85 ? 480 + rnd() * 120 : r > 0.75 ? 600 : 447 + rnd() * 12;
            ctx.fillRect(x, top, 1, BLOCK.bottom - top);
            x += 2;
        }
        x += 3 + Math.floor(rnd() * 9);
    }
}

function drawGrid() {
    for (let k = 0; k < X_NAMES.length; k++) {
        const x = Math.round(X_START + k * X_STEP);
        for (let y = FRAME.top + 3; y < FRAME.bottom; y += 6) {
            ctx.fillStyle = (x > BLOCK.left && x < BLOCK.right && y > 285) ? '#333' : '#777';
            ctx.fillRect(x, y, 1, 1);
        }
        ctx.fillStyle = '#aaa';
        ctx.fillRect(x, FRAME.bottom, 1, 4);
    }
    for (let i = 0; i < 5; i++) {
        const y = Y_TICKS[i][0];
        for (let x = FRAME.left + 3; x < FRAME.right; x += 7) {
            ctx.fillStyle = (x > BLOCK.left && x < BLOCK.right && y > 285) ? '#333' : '#777';
            ctx.fillRect(x, y, 1, 1);
        }
        ctx.fillStyle = '#fff';
        ctx.fillRect(FRAME.left - 3, y, 3, 1);
    }
}

function drawTrace() {
    // flat part with a little noise
    const flat = [];
    for (let x = 39; x <= 290; x += 2) flat.push([x, 533.5 + (rnd() - 0.5) * 1.6]);
    polyline(flat, 2);
    ctx.fillStyle = YELLOW;
    ctx.fillRect(290, 358, 2, 176);

    polyline([[291, 183], [293, 197], [296, 215], [300, 240], [304, 258], [308, 268], [312, 272], [316, 268],
        [320, 263], [326, 262], [331, 266], [336, 274], [342, 284], [348, 288], [356, 290], [364, 291], [369, 294], [373, 298]], 2.2);

    // after the burst
    ctx.fillRect(1161, 580, 2, 34);
    polyline([[1162, 614], [1163, 560], [1164, 492], [1165, 505], [1166, 525], [1168, 538], [1172, 532], [1178, 524],
        [1186, 513], [1195, 503], [1205, 495], [1215, 488], [1225, 482], [1226, 482], [1226.5, 555], [1240, 556],
        [1250, 554], [1262, 549], [1280, 545], [1300, 542], [1320, 540], [1340, 538], [1354, 537]], 2);
}

function drawFrame() {
    ctx.fillStyle = '#fff';
    ctx.fillRect(FRAME.left, FRAME.top, FRAME.right - FRAME.left, 1);
    ctx.fillRect(FRAME.left, FRAME.bottom, FRAME.right - FRAME.left, 1);
    ctx.fillRect(FRAME.left, FRAME.top, 1, FRAME.bottom - FRAME.top);
    ctx.fillRect(FRAME.right, FRAME.top, 1, FRAME.bottom - FRAME.top + 1);

    // zero line
    for (let x = 9; x < FRAME.right; x += 4.6) {
        ctx.fillRect(Math.round(x), 532, 3, 1);
    }
}

function drawMarkers() {
    ctx.fillStyle = '#a000a0';
    ctx.fillRect(292, 118, 1, FRAME.bottom - 118);
    ctx.fillStyle = '#0000c8';
    ctx.fillRect(485, 118, 1, FRAME.bottom - 118);
    triangle(285, 111, 300, 111, 292.5, 119, '#800080');
    triangle(478, 111, 493, 111, 485.5, 119, '#0020e0');

    // handles on the right and left rulers
    triangle(1357, 125, 1367, 125, 1362, 119, YELLOW);
    triangle(1357, 589, 1367, 589, 1362, 596, YELLOW);
    triangle(1362, 353, 1366, 357, 1358, 357, YELLOW);
    triangle(1362, 361, 1366, 357, 1358, 357, YELLOW);
    ctx.fillStyle = YELLOW;
    ctx.beginPath();
    ctx.arc(13, 532, 4, 0, Math.PI * 2);
    ctx.fill();
}

ctx.translate(-ORIGIN_X, -ORIGIN_Y);
drawGrid();
drawBlock();
drawTrace();
drawGrid();
drawFrame();
drawMarkers();

Y_TICKS.forEach(t => addLabel('y-label', t[1], 5, t[0] - 4));
X_NAMES.forEach((name, k) => addLabel('x-label', name, X_START + k * X_STEP - 22, 599));
addLabel('cursor-num', '1', 288, 111);
addLabel('cursor-num', '2', 481, 111);
```
